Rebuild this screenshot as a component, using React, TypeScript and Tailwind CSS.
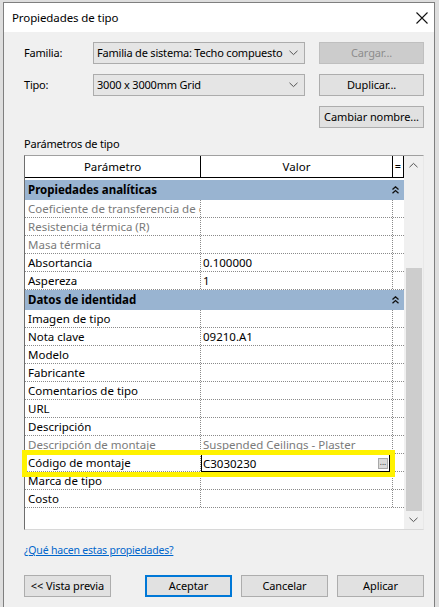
import React from "react";

type Row = { name: string; value?: string; muted?: boolean; editing?: boolean };

const analiticas: Row[] = [
  { name: "Coeficiente de transferencia de calor (U)", muted: true },
  { name: "Resistencia térmica (R)", muted: true },
  { name: "Masa térmica", muted: true },
  { name: "Absortancia", value: "0.100000" },
  { name: "Aspereza", value: "1" },
];

const identidad: Row[] = [
  { name: "Imagen de tipo" },
  { name: "Nota clave", value: "09210.A1" },
  { name: "Modelo" },
  { name: "Fabricante" },
  { name: "Comentarios de tipo" },
  { name: "URL" },
  { name: "Descripción" },
  { name: "Descripción de montaje", value: "Suspended Ceilings - Plaster", muted: true },
  { name: "Código de montaje", value: "C3030230", editing: true },
  { name: "Marca de tipo" },
  { name: "Costo" },
];

function ChevronDown({ className }: { className?: string }) {
  return (
    <svg width="9" height="6" viewBox="0 0 9 6" className={className}>
      <path d="M0.5 0.8 L4.5 4.6 L8.5 0.8" fill="none" stroke="#555" strokeWidth="1" />
    </svg>
  );
}

function DoubleUp() {
  return (
    <svg width="7" height="8" viewBox="0 0 7 8">
      <path d="M0.5 3.5 L3.5 0.8 L6.5 3.5 M0.5 7.2 L3.5 4.5 L6.5 7.2" fill="none" stroke="#111" strokeWidth="1.3" />
    </svg>
  );
}

function Button({ label, primary, disabled, w = "w-[105px]" }: { label: string; primary?: boolean; disabled?: boolean; w?: string }) {
  return (
    <div
      className={`${w} h-[22px] flex items-center justify-center whitespace-nowrap text-[11px] tracking-[-0.1px] ${
        disabled
          ? "bg-[#cccccc] border border-[#bfbfbf] text-[#8d8d8d]"
          : primary
          ? "bg-[#e1e1e1] border-2 border-[#0078d7] text-black"
          : "bg-[#e1e1e1] border border-[#adadad] text-black"
      }`}
    >
      {label}
    </div>
  );
}

function DataRow({ row }: { row: Row }) {
  const text = row.muted ? "text-[#7a7a7a]" : "text-black";
  return (
    <div className="h-[18px] flex border-b border-dotted border-[#8a8a8a] text-[11.5px] leading-[17px]">
      <div className={`w-[175px] pl-[3px] overflow-hidden whitespace-nowrap ${text}`}>{row.name}</div>
      <div className="w-[192px] border-l border-dotted border-[#8a8a8a] relative">
        {row.editing ? (
          <div className="absolute left-0 top-[0px] right-[2px] h-[19px] border border-black border-b-2 bg-white flex items-center justify-between pl-[1px]">
            <span className="text-black leading-[15px]">{row.value}</span>
            <span className="w-[10px] h-[11px] mr-[1px] bg-[#dadada] border border-[#a8a8a8] text-[8px] leading-[6px] text-center text-[#333]">...</span>
          </div>
        ) : (
          <div className={`pl-[2px] overflow-hidden whitespace-nowrap ${text}`}>{row.value ?? ""}</div>
        )}
      </div>
      <div className="flex-1 border-l border-dotted border-[#8a8a8a]" />
    </div>
  );
}

function GroupRow({ title }: { title: string }) {
  return (
    <div className="h-[20px] bg-[#99b4d1] flex items-center justify-between pl-[3px] pr-[5px] text-[11.5px] font-bold text-black">
      <span>{title}</span>
      <DoubleUp />
    </div>
  );
}

export default function App() {
  return (
    <div
      className="w-[439px] h-[607px] overflow-hidden bg-[#dedede] pl-[3px] pr-[4px] pt-[2px]"
      style={{ fontFamily: '"Noto Sans", "Open Sans", sans-serif' }}
    >
      <div className="h-[620px] border border-[#7f7f7f] bg-[#f0f0f0] flex flex-col">
        {/* title bar */}
        <div className="h-[29px] bg-white flex items-center justify-between pl-[8px] pr-[5px]">
          <span className="text-[11.5px] tracking-[-0.1px] text-black">Propiedades de tipo</span>
          <svg width="12" height="12" viewBox="0 0 12 12" className="mr-[1px]">
            <path d="M0.5 0.5 L11.5 11.5 M11.5 0.5 L0.5 11.5" stroke="#111" strokeWidth="1.1" />
          </svg>
        </div>

        <div className="pl-[20px] pr-[10px] pt-[10px] flex flex-col text-[11px] tracking-[-0.2px]">
          {/* Familia */}
          <div className="flex items-center h-[22px]">
            <div className="w-[69px] text-black">Familia:</div>
            <div className="w-[212px] h-[22px] bg-[#e5e5e5] border border-[#acacac] flex items-center justify-between pl-[3px] pr-[6px] whitespace-nowrap">
              <span>Familia de sistema: Techo compuesto</span>
              <ChevronDown />
            </div>
            <div className="ml-[14px]">
              <Button label="Cargar..." disabled />
            </div>
          </div>
          {/* Tipo */}
          <div className="flex items-center h-[22px] mt-[10px]">
            <div className="w-[69px] text-black">Tipo:</div>
            <div className="w-[212px] h-[22px] bg-[#e5e5e5] border border-[#acacac] flex items-center justify-between pl-[3px] pr-[6px] whitespace-nowrap">
              <span>3000 x 3000mm Grid</span>
              <ChevronDown />
            </div>
            <div className="ml-[14px]">
              <Button label="Duplicar..." />
            </div>
          </div>
          <div className="flex justify-end mt-[10px]">
            <Button label="Cambiar nombre..." />
          </div>

          <div className="mt-[8px] h-[16px] leading-[16px] text-black">Parámetros de tipo</div>

          {/* grid */}
          <div className="mt-[3px] w-[400px] h-[375px] tracking-normal border-t border-l border-t-[#a0a0a0] border-l-[#6d6d6d] border-r border-b border-r-[#e8e8e8] border-b-[#d8d8d8] flex relative">
            <div className="w-[379px] bg-white flex flex-col">
              <div className="h-[22px] flex border-b border-black text-[11.5px] text-black">
                <div className="w-[175px] flex items-center justify-center">Parámetro</div>
                <div className="w-[192px] border-l border-black flex items-center justify-center">Valor</div>
                <div className="flex-1 border-l border-r border-black flex items-center justify-center text-[11px]">=</div>
              </div>
              <div className="h-[2px]" />
              <GroupRow title="Propiedades analíticas" />
              {analiticas.map((r) => (
                <DataRow key={r.name} row={r} />
              ))}
              <GroupRow title="Datos de identidad" />
              {identidad.map((r) => (
                <DataRow key={r.name} row={r} />
              ))}
            </div>
            {/* scrollbar */}
            <div className="w-[19px] bg-[#f0f0f0] flex flex-col items-center">
              <div className="h-[18px] flex items-center justify-center">
                <ChevronDown className="rotate-180" />
              </div>
              <div className="mt-[94px] w-[16px] h-[244px] bg-[#cdcdcd]" />
              <div className="h-[18px] flex items-center justify-center">
                <ChevronDown />
              </div>
            </div>
            {/* highlight annotation */}
            <div className="absolute left-[-3px] top-[294px] w-[373px] h-[27px] border-[5px] border-[#fff200] pointer-events-none" />
          </div>

          <div className="mt-[12px] h-[16px] leading-[16px]">
            <span className="text-[#0066cc] underline text-[10.5px]">¿Qué hacen estas propiedades?</span>
          </div>

          <div className="mt-[17px] flex">
            <Button label="<< Vista previa" w="w-[87px]" />
            <div className="ml-[34px]">
              <Button label="Aceptar" primary w="w-[87px]" />
            </div>
            <div className="ml-[9px]">
              <Button label="Cancelar" w="w-[87px]" />
            </div>
            <div className="ml-[9px]">
              <Button label="Aplicar" w="w-[87px]" />
            </div>
          </div>
        </div>
      </div>
    </div>
  );
}
